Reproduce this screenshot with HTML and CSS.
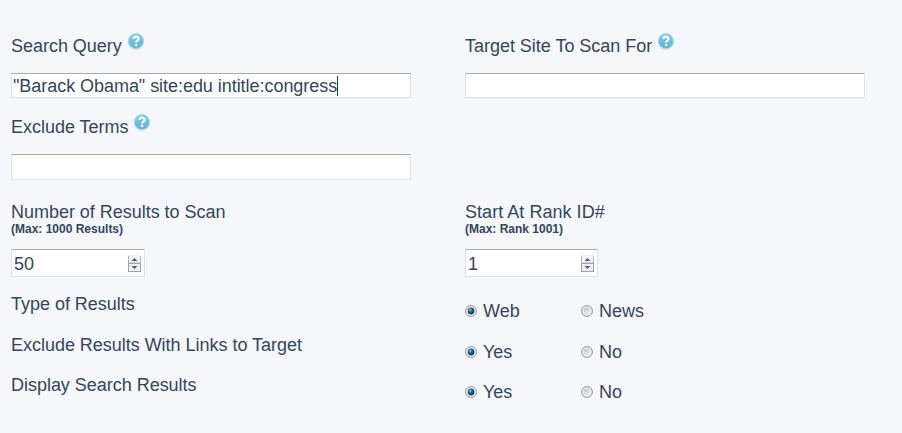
FILE: index.html
```
<!DOCTYPE html>
<html lang="en">
<head>
<meta charset="utf-8">
<title>Search Scan</title>
<link rel="stylesheet" href="styles.css">
</head>
<body>
<svg class="defs" width="0" height="0" aria-hidden="true">
  <defs>
    <linearGradient id="blue" x1="0" y1="0" x2="0" y2="1"><stop offset="0" stop-color="#87cde5"/><stop offset="1" stop-color="#5cb2d7"/></linearGradient>
    <radialGradient id="dot" cx=".38" cy=".35" r=".7"><stop offset="0" stop-color="#8ed3ec"/><stop offset=".4" stop-color="#24678b"/><stop offset="1" stop-color="#092d4b"/></radialGradient>
    <linearGradient id="off" x1="0" y1="0" x2="1" y2="1"><stop offset="0" stop-color="#bcbfc4"/><stop offset="1" stop-color="#f7f7f8"/></linearGradient>
    <symbol id="help" viewBox="0 0 18 18">
      <circle cx="9" cy="10" r="8" fill="#c9cdd2" opacity=".6"/>
      <circle cx="9" cy="9" r="7.6" fill="url(#blue)" stroke="#a9dced" stroke-width=".8"/>
      <path d="M6.5 7.1C6.5 3.8 11.5 3.9 11.5 6.9C11.5 8.6 9.1 8.5 9.1 10.5" fill="none" stroke="#fff" stroke-width="2.1"/>
      <circle cx="9.1" cy="13" r="1.2" fill="#fff"/>
    </symbol>
    <symbol id="radio-on" viewBox="0 0 12 12">
      <circle cx="6" cy="6" r="5.4" fill="#f4f6f8" stroke="#8b9097"/>
      <circle cx="6" cy="6" r="3.4" fill="url(#dot)"/>
    </symbol>
    <symbol id="radio-off" viewBox="0 0 12 12">
      <circle cx="6" cy="6" r="5.4" fill="#f4f4f4" stroke="#8f9094"/>
      <circle cx="6" cy="6" r="3.7" fill="url(#off)"/>
    </symbol>
    <symbol id="spin" viewBox="0 0 13 17">
      <rect x=".5" y=".5" width="12" height="7.5" fill="#f5f5f7" stroke="#b5b6bd"/>
      <rect x=".5" y="8.5" width="12" height="8" fill="#f0f0f3" stroke="#9fa0a8"/>
      <path d="M0 .5H13" stroke="#f0f0f3"/>
      <path d="M3.5 6L6.5 3L9.5 6ZM3.5 11L6.5 14L9.5 11Z" fill="#535b83"/>
    </symbol>
  </defs>
</svg>
<main class="form">
  <div class="row row-query">
    <div class="field">
      <div class="label">Search Query<svg class="help"><use href="#help"/></svg></div>
      <div class="input"><span class="value">"Barack Obama" site:edu intitle:congress</span><span class="caret"></span></div>
    </div>
    <div class="field">
      <div class="label">Target Site To Scan For<svg class="help"><use href="#help"/></svg></div>
      <div class="input"></div>
    </div>
  </div>
  <div class="row row-exclude">
    <div class="field">
      <div class="label">Exclude Terms<svg class="help"><use href="#help"/></svg></div>
      <div class="input tall"></div>
    </div>
  </div>
  <div class="row row-numbers">
    <div class="field">
      <div class="label tight">Number of Results to Scan</div>
      <div class="hint">(Max: 1000 Results)</div>
      <div class="input number"><span>50</span><svg class="spin"><use href="#spin"/></svg></div>
    </div>
    <div class="field">
      <div class="label tight rank">Start At Rank ID#</div>
      <div class="hint">(Max: Rank 1001)</div>
      <div class="input number narrow"><span>1</span><svg class="spin"><use href="#spin"/></svg></div>
    </div>
  </div>
  <div class="row row-choice">
    <div class="choice-label">Type of Results</div>
    <div class="options"><span class="option"><svg class="radio"><use href="#radio-on"/></svg>Web</span><span class="option"><svg class="radio"><use href="#radio-off"/></svg>News</span></div>
  </div>
  <div class="row row-choice short">
    <div class="choice-label">Exclude Results With Links to Target</div>
    <div class="options"><span class="option"><svg class="radio"><use href="#radio-on"/></svg>Yes</span><span class="option"><svg class="radio"><use href="#radio-off"/></svg>No</span></div>
  </div>
  <div class="row row-choice">
    <div class="choice-label">Display Search Results</div>
    <div class="options"><span class="option"><svg class="radio"><use href="#radio-on"/></svg>Yes</span><span class="option"><svg class="radio"><use href="#radio-off"/></svg>No</span></div>
  </div>
</main>
</body>
</html>
```
FILE: styles.css
```
* { box-sizing: border-box; }
body {
  margin: 0;
  background: #f5f7fb;
  color: #34465b;
  font: 18px/20px "Liberation Sans", Arial, sans-serif;
}
.defs { position: absolute; }
.form { padding: 36px 0 0 11px; }
.row { display: grid; grid-template-columns: 454px 400px; }
.row-query { height: 81px; }
.row-exclude { height: 85px; }
.row-numbers { height: 92px; }
.row-choice { height: 41px; }
.row-choice.short { height: 40px; }
.label, .choice-label { letter-spacing: -0.025px; white-space: nowrap; }
.label { display: flex; height: 20px; margin-bottom: 17px; }
.label.tight { margin-bottom: 0; }
.label.rank { letter-spacing: 0.04px; }
.help { width: 18px; height: 18px; margin: -4px 0 0 5px; }
.hint { height: 14px; margin-bottom: 13px; font-size: 12px; line-height: 14px; font-weight: bold; }
.input {
  display: flex;
  align-items: center;
  width: 400px;
  height: 25px;
  padding: 0 1px;
  background: #fff;
  border: 1px solid #dfe2e8;
  border-top-color: #a9abaf;
  white-space: nowrap;
}
.input.tall { height: 26px; }
.input.number { justify-content: space-between; width: 134px; height: 28px; padding: 1px 3px 0 2px; }
.input.number.narrow { width: 133px; }
.value { letter-spacing: -0.045px; }
.caret { width: 1px; height: 20px; background: #26384c; }
.spin { width: 13px; height: 17px; margin-top: -1px; }
.options { display: flex; padding-top: 7px; }
.option { display: flex; width: 116px; height: 20px; }
.radio { width: 12px; height: 12px; margin: 4px 6px 0 0; }
```
